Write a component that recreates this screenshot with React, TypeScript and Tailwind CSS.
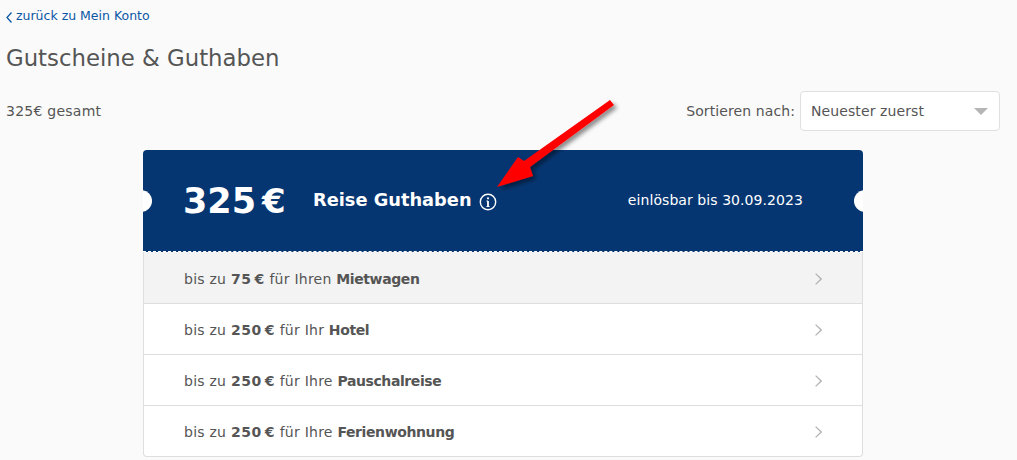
import React from "react";

const rows = [
  { pre: "bis zu ", amount: "75", mid: " für Ihren ", name: "Mietwagen", active: true },
  { pre: "bis zu ", amount: "250", mid: " für Ihr ", name: "Hotel" },
  { pre: "bis zu ", amount: "250", mid: " für Ihre ", name: "Pauschalreise" },
  { pre: "bis zu ", amount: "250", mid: " für Ihre ", name: "Ferienwohnung", last: true },
];

const Chevron = () => (
  <svg width="7" height="12" viewBox="0 0 7 12" fill="none" stroke="#b3b3b3" strokeWidth="1.3">
    <path d="M.6 .6L6.2 6 .6 11.4" />
  </svg>
);

const App = () => {
  return (
    <div className="relative h-[460px] w-[1017px] overflow-hidden bg-[#fafafa] px-[6px] font-['DejaVu_Sans',sans-serif] text-[#555]">
      <a className="mt-[8px] flex h-[16px] items-center gap-[4px] text-[12.5px] leading-[16px] text-[#0a57a5]">
        <svg width="6" height="11" viewBox="0 0 6 11" fill="none" stroke="#0a57a5" strokeWidth="1.3" className="mt-[2px]">
          <path d="M5.5 .5L1 5.5l4.5 5" />
        </svg>
        zurück zu Mein Konto
      </a>
      <h1 className="mt-[18px] text-[22.8px] leading-[32px] font-normal">Gutscheine &amp; Guthaben</h1>
      <div className="mt-[17px] flex h-[40px] items-center justify-between pr-[11px] text-[14px] tracking-[0.1px]">
        <span className="tracking-[0.25px]">325€ gesamt</span>
        <div className="flex items-center gap-[5px]">
          <span>Sortieren nach:</span>
          <div className="flex h-[40px] w-[200px] items-center justify-between rounded-[4px] border border-[#e0e0e0] bg-white pr-[11px] pl-[10px]">
            Neuester zuerst
            <span className="h-0 w-0 border-x-[7px] border-t-[7px] border-x-transparent border-t-[#b5b5b5]" />
          </div>
        </div>
      </div>

      <div className="mt-[19px] ml-[137px] w-[720px]">
        <div className="relative flex h-[102px] items-center overflow-hidden rounded-t-[4px] border-b border-dashed border-white bg-[#063672] pr-[60px] pl-[40px] text-white">
          <span className="absolute top-[40px] -left-[13px] h-[22px] w-[22px] rounded-full bg-white" />
          <span className="absolute top-[40px] -right-[13px] h-[22px] w-[22px] rounded-full bg-white" />
          <span className="w-[130px] text-[35px] leading-[44px] font-bold">
            325<span className="ml-[6px] text-[34px]">€</span>
          </span>
          <span className="text-[17.8px] font-bold">Reise Guthaben</span>
          <svg width="18" height="18" viewBox="0 0 18 18" fill="none" stroke="#fff" className="mt-[2px] ml-[7px]">
            <circle cx="9" cy="9" r="7.7" strokeWidth="1.4" />
            <path d="M9 8v5.5" strokeWidth="1.8" />
            <path d="M7.5 8H9M7.5 13.5h3" strokeWidth="1.1" />
            <circle cx="9" cy="5.3" r="1.1" fill="#fff" stroke="none" />
          </svg>
          <span className="ml-auto text-[14px] tracking-[0.07px]">einlösbar bis 30.09.2023</span>
        </div>
        <div className="overflow-hidden rounded-b-[4px] border-x border-b border-[#dedede] bg-white">
          {rows.map((row, index) => (
            <div
              key={index}
              className={`flex items-center justify-between border-[#dedede] px-[40px] text-[14px] tracking-[0.25px] ${
                row.active ? "h-[52px] bg-[#f3f3f3] pt-[3px]" : row.last ? "h-[50px] pt-[2px]" : "h-[51px] pt-[2px]"
              } ${row.last ? "" : "border-b"}`}
            >
              <span>
                {row.pre}
                <b className="tracking-[0.5px]">
                  {row.amount}
                  <span className="ml-[3px]">€</span>
                </b>
                {row.mid}
                <b className="tracking-[-0.4px]">{row.name}</b>
              </span>
              <Chevron />
            </div>
          ))}
        </div>
      </div>

      {/* annotation arrow */}
      <svg className="absolute top-0 left-0" width="1017" height="460" viewBox="0 0 1017 460">
        <defs>
          <filter id="arrowShadow" x="-20%" y="-20%" width="150%" height="150%">
            <feDropShadow dx="3" dy="3" stdDeviation="2" floodColor="#000" floodOpacity="0.45" />
          </filter>
        </defs>
        <path
          d="M610 100L614 105L530 167L533 176L497 187L518 157L524 161Z"
          fill="#ff0000"
          filter="url(#arrowShadow)"
        />
      </svg>
    </div>
  );
};

export default App;
